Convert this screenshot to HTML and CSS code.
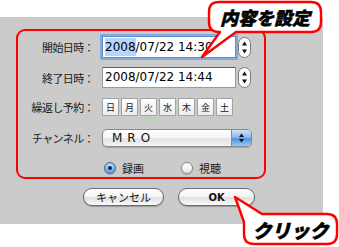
FILE: index.html
```html
<!DOCTYPE html>
<html lang="ja">
<head>
    <meta charset="UTF-8">
    <title>録画予約</title>
    <link rel="stylesheet" href="styles.css">
</head>
<body>

<div class="window">
    <div class="frame">
        <div class="row row-start">
            <span class="label">開始日時：</span>
            <span class="input focused"><span class="sel">2008</span>/07/22 14:30</span>
            <svg class="stepper" width="13" height="21" viewBox="0 0 13 21">
                <rect x="0.5" y="0.5" width="12" height="20" rx="6" fill="#fbfbfb" stroke="#7a7a7a"/>
                <path d="M4 8.5 L6.5 4.5 L9 8.5 Z" fill="#111"/>
                <path d="M4 12.5 L6.5 16.5 L9 12.5 Z" fill="#111"/>
            </svg>
        </div>
        <div class="row row-end">
            <span class="label">終了日時：</span>
            <span class="input">2008/07/22 14:44</span>
            <svg class="stepper" width="13" height="21" viewBox="0 0 13 21">
                <rect x="0.5" y="0.5" width="12" height="20" rx="6" fill="#fbfbfb" stroke="#7a7a7a"/>
                <path d="M4 8.5 L6.5 4.5 L9 8.5 Z" fill="#111"/>
                <path d="M4 12.5 L6.5 16.5 L9 12.5 Z" fill="#111"/>
            </svg>
        </div>
        <div class="row row-repeat">
            <span class="label">繰返し予約：</span>
            <div class="days">
                <span class="day">日</span>
                <span class="day">月</span>
                <span class="day today">火</span>
                <span class="day">水</span>
                <span class="day">木</span>
                <span class="day">金</span>
                <span class="day">土</span>
            </div>
        </div>
        <div class="row row-channel">
            <span class="label">チャンネル：</span>
            <div class="popup">
                <span class="popup-text">MRO</span>
                <span class="popup-arrows">
                    <svg width="19" height="16" viewBox="0 0 19 16">
                        <path d="M7 7 L9.5 3.5 L12 7 Z" fill="#111"/>
                        <path d="M7 9 L9.5 12.5 L12 9 Z" fill="#111"/>
                    </svg>
                </span>
            </div>
        </div>
        <div class="row row-mode">
            <label class="radio-opt"><span class="radio on"></span>録画</label>
            <label class="radio-opt second"><span class="radio"></span>視聴</label>
        </div>
    </div>

    <div class="buttons">
        <span class="btn btn-cancel">キャンセル</span>
        <span class="btn btn-ok">OK</span>
    </div>
</div>

<!-- annotation balloons drawn over the dialog -->
<svg class="balloons" width="339" height="247" viewBox="0 0 339 247">
    <path d="M219 2 H311 Q321 2 321 12 V22 Q321 32 311 32 H236 L202 57 L220 32 H219 Q209 32 209 22 V12 Q209 2 219 2 Z"
          fill="#fff" stroke="#f00" stroke-width="2.4" stroke-linejoin="round"/>
    <path d="M262 214 H327 Q337 214 337 224 V234 Q337 244 327 244 H254 Q244 244 244 234 V222 L235 197 Z"
          fill="#fff" stroke="#f00" stroke-width="2.4" stroke-linejoin="round"/>
</svg>
<span class="balloon-text balloon-set">内容を設定</span>
<span class="balloon-text balloon-click">クリック</span>

</body>
</html>
```

FILE: styles.css
```css
body {
    margin: 0;
    width: 339px;
    height: 247px;
    overflow: hidden;
    position: relative;
    background: #fff;
    color: #111;
    font-family: "Noto Sans CJK JP", "DejaVu Sans", sans-serif;
}
.window {
    margin-top: 17px;
    width: 323px;
    height: 207px;
    box-sizing: border-box;
    padding: 12px 0 0 16px;
    background: #cbcbcb; /* aqua dialog grey */
}
.frame {
    width: 250px;
    height: 150px;
    box-sizing: border-box;
    border: 2px solid #f00;
    border-radius: 9px;
    padding-top: 5px;
}
.row {
    display: flex;
    align-items: center;
}
.row-start { height: 22px; }
.row-end { height: 21px; margin-top: 9px; }
.row-repeat { height: 18px; margin-top: 10px; }
.row-channel { height: 18px; margin-top: 13px; }
.row-mode { height: 13px; margin-top: 14px; padding-left: 86px; }

.label {
    width: 76px;
    margin-right: 8px;
    text-align: right;
    font-size: 11px;
    letter-spacing: -0.6px;
    color: #1a1a1a;
    white-space: nowrap;
}

/* date fields */
.input {
    width: 134px;
    height: 21px;
    box-sizing: border-box;
    padding-left: 2px;
    background: #fff;
    border: 1px solid #9a9a9a;
    border-top-color: #5f5f5f;
    font-family: "DejaVu Sans", sans-serif;
    font-size: 12px;
    line-height: 19px;
    color: #000;
    white-space: nowrap;
}
.row-start .input { height: 22px; line-height: 20px; }
.input.focused {
    border-color: #5d8fcf;
    box-shadow: 0 0 0 2px #84abdf;
}
.sel {
    background: #b5d5ff;
    padding: 2px 0;
}
.stepper {
    margin-left: 2px;
    flex: none;
}

/* weekday toggles */
.days {
    display: flex;
    gap: 2px;
}
.day {
    position: relative;
    width: 17px;
    height: 18px;
    box-sizing: border-box;
    display: flex;
    align-items: center;
    justify-content: center;
    border: 1px solid #a3a3a3;
    background: linear-gradient(#ffffff, #ececec);
    font-size: 9px;
    color: #222;
}
.day.today::after {
    content: "";
    position: absolute;
    left: 1px;
    right: 1px;
    bottom: -4px;
    height: 2px;
    background: #a9d9a4;
}

/* channel popup */
.popup {
    width: 150px;
    height: 18px;
    box-sizing: border-box;
    display: flex;
    border: 1px solid #8a8a8a;
    border-radius: 5px;
    overflow: hidden;
    background: linear-gradient(#ffffff 0%, #f4f4f4 50%, #e2e2e2 55%, #f3f3f3 100%);
    box-shadow: 0 1px 1px rgba(0,0,0,0.2);
}
.popup-text {
    flex: 1;
    padding-left: 9px;
    font-family: "DejaVu Sans", sans-serif;
    font-size: 12px;
    line-height: 16px;
    letter-spacing: 5px;
    color: #111;
}
.popup-arrows {
    width: 19px;
    border-left: 1px solid #6f8fbf;
    background: linear-gradient(#cfe3f8 0%, #8bbbec 45%, #4f92e0 55%, #9cc9f4 100%);
}
.popup-arrows svg { display: block; }

/* record / view radios */
.radio-opt {
    display: flex;
    align-items: center;
    font-size: 11px;
    color: #1a1a1a;
}
.radio-opt.second { margin-left: 37px; }
.radio {
    position: relative;
    width: 12px;
    height: 12px;
    box-sizing: border-box;
    margin-right: 6px;
    border-radius: 50%;
    border: 1px solid #8a8a8a;
    background: linear-gradient(#ffffff, #e6e6e6);
    box-shadow: 0 1px 1px rgba(0,0,0,0.2);
}
.radio.on {
    border-color: #3f6ea8;
    background: radial-gradient(circle at 50% 30%, #d6e8fa 0%, #7fb2ea 55%, #3d7fd0 100%);
}
.radio.on::after {
    content: "";
    position: absolute;
    left: 3px;
    top: 3px;
    width: 4px;
    height: 4px;
    border-radius: 50%;
    background: #14233a;
}

/* dialog buttons */
.buttons {
    display: flex;
    margin-top: 9px;
    padding-left: 67px;
    gap: 14px;
}
.btn {
    height: 18px;
    box-sizing: border-box;
    display: flex;
    align-items: center;
    justify-content: center;
    border: 1px solid #6c6c6c;
    border-radius: 9px;
    background: linear-gradient(#ffffff 0%, #f5f5f5 45%, #e0e0e0 55%, #fbfbfb 100%);
    box-shadow: 0 1px 1px rgba(0,0,0,0.25);
    font-size: 11px;
    color: #111;
}
.btn-cancel { width: 81px; }
.btn-ok {
    width: 77px;
    font-family: "DejaVu Sans", sans-serif;
    font-weight: bold;
    font-size: 10px;
}

/* annotation balloons */
.balloons {
    position: absolute;
    left: 0;
    top: 0;
    pointer-events: none;
}
.balloon-text {
    position: absolute;
    height: 32px;
    display: flex;
    align-items: center;
    justify-content: center;
    font-family: "Noto Sans CJK JP", sans-serif;
    font-weight: 900;
    font-style: italic;
    color: #000;
    -webkit-text-stroke: 0.5px #000;
    white-space: nowrap;
}
.balloon-set {
    left: 208px;
    top: 1px;
    width: 114px;
    font-size: 18px;
}
.balloon-click {
    left: 243px;
    top: 213px;
    width: 95px;
    font-size: 19px;
}
```
